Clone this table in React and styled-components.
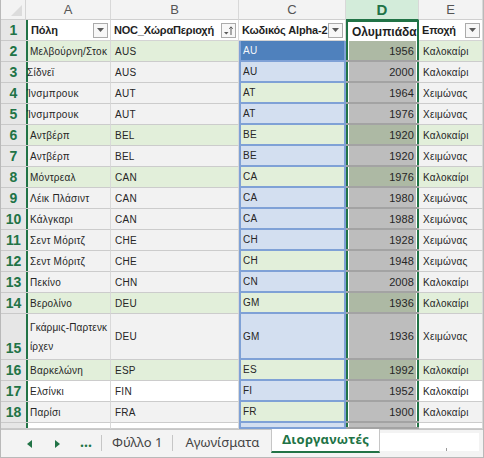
import React from 'react';
import styled, { createGlobalStyle, css } from 'styled-components';

const GlobalStyle = createGlobalStyle`
  html, body {
    margin: 0;
    padding: 0;
    background: #ffffff;
  }
`;

const GREEN = '#217346';

const Frame = styled.div`
  width: 484px;
  height: 458px;
  box-sizing: border-box;
  border: 1px solid #b9b9b9;
  border-top: none;
  display: flex;
  flex-direction: column;
  overflow: hidden;
  font-family: 'Liberation Sans', Arial, sans-serif;
  background: #ffffff;
`;

const Sheet = styled.div`
  display: grid;
  grid-template-columns: 25px 85px 128px 107px 73px 1fr;
  grid-template-rows: 20px repeat(14, 21px) 46px repeat(3, 21px) 6px;
  height: 429px;
  overflow: hidden;
`;

const Corner = styled.div`
  position: relative;
  background: #f3f3f3;
  border-right: 1px solid #d4d4d4;
  border-bottom: 1px solid #cfcfcf;
  box-sizing: border-box;
  &::after {
    content: '';
    position: absolute;
    right: 3px;
    bottom: 3px;
    width: 0;
    height: 0;
    border-left: 11px solid transparent;
    border-bottom: 11px solid #dcdcdc;
  }
`;

const ColLetter = styled.div`
  display: flex;
  align-items: center;
  justify-content: center;
  box-sizing: border-box;
  background: ${(p) => (p.$active ? '#d3ecda' : '#f3f3f3')};
  color: ${(p) => (p.$active ? GREEN : '#555555')};
  font-weight: ${(p) => (p.$active ? 700 : 400)};
  font-size: ${(p) => (p.$active ? '15px' : '13px')};
  border-right: 1px solid #d8d8d8;
  border-bottom: 1px solid ${(p) => (p.$active ? GREEN : '#cfcfcf')};
`;

const RowNum = styled.div`
  display: flex;
  align-items: ${(p) => (p.$tall ? 'flex-end' : 'center')};
  justify-content: center;
  padding-bottom: ${(p) => (p.$tall ? '3px' : '0')};
  box-sizing: border-box;
  background: #e6e6e6;
  color: ${GREEN};
  font-weight: 700;
  font-size: 14px;
  border-bottom: 1px solid #c9c9c9;
`;

const Cell = styled.div`
  display: flex;
  align-items: center;
  justify-content: ${(p) => (p.$right ? 'flex-end' : 'flex-start')};
  box-sizing: border-box;
  min-width: 0;
  overflow: hidden;
  padding: 0 ${(p) => (p.$right ? '5px' : '2px')} 0 ${(p) => (p.$tight ? '1px' : '4px')};
  font-size: 10px;
  letter-spacing: 0.25px;
  color: ${(p) => p.$color || '#262626'};
  background: ${(p) => p.$bg};
  border-right: 1px solid #d9d9d9;
  border-bottom: 1px solid #cccccc;
  white-space: nowrap;
  ${(p) => p.$edge && css`box-shadow: inset 2px 0 0 ${GREEN};`}
  ${(p) =>
    p.$sel &&
    css`
      border-right: none;
      border-bottom: 2px solid #7fa1d6;
      box-shadow: inset 2px 0 0 #7fa1d6, inset -2px 0 0 #7fa1d6;
    `}
  ${(p) =>
    p.$col &&
    css`
      border-right: none;
      border-bottom: 2px solid #a3a3a3;
      box-shadow: inset 2px 0 0 ${GREEN}, inset 3px 0 0 #ffffff, inset -2px 0 0 ${GREEN},
        inset -3px 0 0 #ffffff;
      padding-right: 5px;
      font-size: 11px;
      letter-spacing: 0.1px;
    `}
`;

const Wrap = styled.span`
  white-space: normal;
  word-break: break-all;
  line-height: 19px;
  letter-spacing: 0.15px;
`;

const HeadCell = styled.div`
  display: flex;
  align-items: center;
  box-sizing: border-box;
  min-width: 0;
  padding: 0 2px 0 ${(p) => (p.$edge ? '5px' : '3px')};
  font-size: 11px;
  font-weight: 700;
  letter-spacing: -0.2px;
  color: #1f1f1f;
  background: #ffffff;
  border-right: 1px solid #d9d9d9;
  border-bottom: 1px solid #d4d4d4;
  white-space: nowrap;
  ${(p) => p.$edge && css`box-shadow: inset 2px 0 0 ${GREEN};`}
  ${(p) =>
    p.$col &&
    css`
      border-right: none;
      border-bottom: none;
      box-shadow: inset 2px 0 0 ${GREEN}, inset -2px 0 0 ${GREEN}, inset 0 2px 0 ${GREEN};
      padding-left: 6px;
      padding-top: 2px;
      font-size: 12px;
      letter-spacing: 0;
    `}
`;

const Label = styled.span`
  flex: 1;
  overflow: hidden;
`;

const FilterBtn = styled.span`
  width: 15px;
  height: 15px;
  flex: none;
  box-sizing: border-box;
  border: 1px solid #ababab;
  background: #f7f7f7;
  display: flex;
  align-items: center;
  justify-content: center;
`;

const TabBar = styled.div`
  flex: 1;
  display: flex;
  align-items: stretch;
  background: #f3f3f3;
  border-top: 1px solid #c6c6c6;
  font-family: 'Noto Sans', 'Open Sans', sans-serif;
  font-size: 13px;
  color: #444444;
`;

const NavBtn = styled.div`
  width: 28px;
  display: flex;
  align-items: center;
  justify-content: center;
`;

const Dots = styled.div`
  width: 30px;
  display: flex;
  align-items: center;
  justify-content: center;
  color: ${GREEN};
  font-weight: 700;
  font-size: 14px;
  padding-bottom: 4px;
  box-sizing: border-box;
`;

const Sep = styled.div`
  width: 1px;
  background: #c6c6c6;
  margin: 5px 0 6px;
`;

const Tab = styled.div`
  display: flex;
  align-items: center;
  padding: 0 ${(p) => p.$pad || 10}px 3px;
  white-space: nowrap;
  ${(p) =>
    p.$active &&
    css`
      margin-top: -1px;
      margin-bottom: 4px;
      background: #ffffff;
      color: ${GREEN};
      font-weight: 700;
      border-bottom: 2px solid ${GREEN};
      border-left: 1px solid #c6c6c6;
      border-right: 1px solid #c6c6c6;
      letter-spacing: 0.3px;
    `}
`;

const Scroll = styled.div`
  flex: 1;
  margin: 3px 4px 6px 0;
  background: #ffffff;
  position: relative;
  &::after {
    content: '';
    position: absolute;
    left: 66px;
    bottom: 0;
    width: 1px;
    height: 3px;
    background: #9a9a9a;
  }
`;

const rows = [
  [2, 'Μελβούρνη/Στοκ', 'AUS', 'AU', 1956, 'Καλοκαίρι'],
  [3, 'Σίδνεϊ', 'AUS', 'AU', 2000, 'Καλοκαίρι'],
  [4, 'Ίνσμπρουκ', 'AUT', 'AT', 1964, 'Χειμώνας'],
  [5, 'Ίνσμπρουκ', 'AUT', 'AT', 1976, 'Χειμώνας'],
  [6, 'Αντβέρπ', 'BEL', 'BE', 1920, 'Καλοκαίρι'],
  [7, 'Αντβέρπ', 'BEL', 'BE', 1920, 'Χειμώνας'],
  [8, 'Μόντρεαλ', 'CAN', 'CA', 1976, 'Καλοκαίρι'],
  [9, 'Λέικ Πλάσιντ', 'CAN', 'CA', 1980, 'Χειμώνας'],
  [10, 'Κάλγκαρι', 'CAN', 'CA', 1988, 'Χειμώνας'],
  [11, 'Σεντ Μόριτζ', 'CHE', 'CH', 1928, 'Χειμώνας'],
  [12, 'Σεντ Μόριτζ', 'CHE', 'CH', 1948, 'Χειμώνας'],
  [13, 'Πεκίνο', 'CHN', 'CN', 2008, 'Καλοκαίρι'],
  [14, 'Βερολίνο', 'DEU', 'GM', 1936, 'Καλοκαίρι'],
  [15, 'Γκάρμις-Παρτενκίρχεν', 'DEU', 'GM', 1936, 'Χειμώνας'],
  [16, 'Βαρκελώνη', 'ESP', 'ES', 1992, 'Καλοκαίρι'],
  [17, 'Ελσίνκι', 'FIN', 'FI', 1952, 'Καλοκαίρι'],
  [18, 'Παρίσι', 'FRA', 'FR', 1900, 'Καλοκαίρι'],
  [19, '', '', '', '', ''],
];

const greenRows = [2, 6, 8, 14, 16];
const whiteRows = [17, 19];
const greenC = [4, 6, 8, 12, 14, 16, 18];

const baseBg = (n) =>
  greenRows.includes(n) ? '#e2efda' : whiteRows.includes(n) ? '#ffffff' : '#f2f2f2';
const selBg = (n) => (n === 2 ? '#4f81bd' : greenC.includes(n) ? '#e2efda' : '#d3dff0');
const colBg = (n) => (greenRows.includes(n) ? '#adb9a4' : '#bdbdbd');

const DownArrow = () => (
  <svg width="9" height="6" viewBox="0 0 9 6">
    <path d="M1 1h7L4.5 5z" fill="#5a5a5a" />
  </svg>
);

const SortArrow = () => (
  <svg width="11" height="11" viewBox="0 0 11 11">
    <path d="M1 7h4.5L3.25 9.5z" fill="#5a5a5a" />
    <path d="M8 10V2M6.3 3.8L8 1.8l1.7 2" stroke="#5a5a5a" strokeWidth="1" fill="none" />
  </svg>
);

const Tri = ({ dir }) => (
  <svg width="5" height="8" viewBox="0 0 5 8">
    <path d={dir === 'left' ? 'M5 0v8L0 4z' : 'M0 0v8l5-4z'} fill={GREEN} />
  </svg>
);

export default function App() {
  return (
    <>
      <GlobalStyle />
      <Frame>
        <Sheet>
          <Corner />
          <ColLetter>A</ColLetter>
          <ColLetter>B</ColLetter>
          <ColLetter>C</ColLetter>
          <ColLetter $active>D</ColLetter>
          <ColLetter>E</ColLetter>

          <RowNum>1</RowNum>
          <HeadCell $edge>
            <Label>Πόλη</Label>
            <FilterBtn>
              <DownArrow />
            </FilterBtn>
          </HeadCell>
          <HeadCell>
            <Label>NOC_ΧώραΠεριοχή</Label>
            <FilterBtn>
              <SortArrow />
            </FilterBtn>
          </HeadCell>
          <HeadCell>
            <Label>Κωδικός Alpha-2</Label>
            <FilterBtn>
              <DownArrow />
            </FilterBtn>
          </HeadCell>
          <HeadCell $col>
            <Label>Ολυμπιάδα</Label>
          </HeadCell>
          <HeadCell>
            <Label>Εποχή</Label>
            <FilterBtn>
              <DownArrow />
            </FilterBtn>
          </HeadCell>

          {rows.map(([n, city, noc, code, year, season]) => (
            <React.Fragment key={n}>
              <RowNum $tall={n === 15}>{n === 19 ? '' : n}</RowNum>
              <Cell $edge $bg={baseBg(n)} $tight={city.startsWith('Ί') || city === 'Σίδνεϊ'}>
                {n === 15 ? <Wrap>{city}</Wrap> : city}
              </Cell>
              <Cell $bg={baseBg(n)}>{noc}</Cell>
              <Cell $sel $bg={selBg(n)} $color={n === 2 ? '#f4f7fb' : undefined}>
                {code}
              </Cell>
              <Cell $col $right $bg={colBg(n)}>
                {year}
              </Cell>
              <Cell $bg={baseBg(n)}>{season}</Cell>
            </React.Fragment>
          ))}
        </Sheet>

        <TabBar>
          <NavBtn style={{ marginLeft: 14 }}>
            <Tri dir="left" />
          </NavBtn>
          <NavBtn>
            <Tri dir="right" />
          </NavBtn>
          <Dots>...</Dots>
          <Sep />
          <Tab $pad={10}>Φύλλο 1</Tab>
          <Sep />
          <Tab $pad={12}>Αγωνίσματα</Tab>
          <Tab $active $pad={10}>
            Διοργανωτές
          </Tab>
          <Scroll />
        </TabBar>
      </Frame>
    </>
  );
}
